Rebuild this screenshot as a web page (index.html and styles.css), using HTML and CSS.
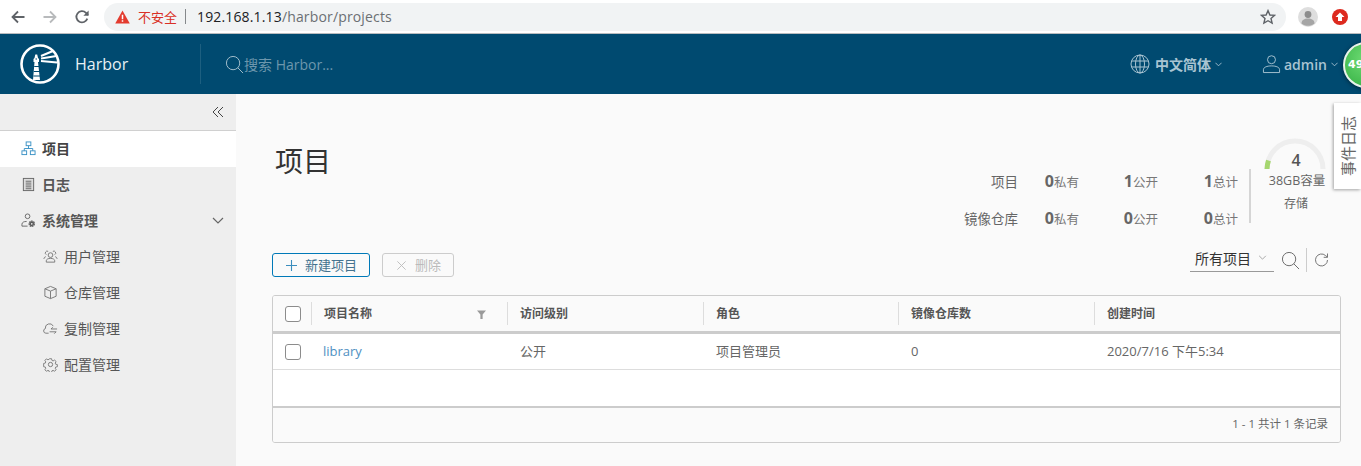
FILE: index.html
```html
<!DOCTYPE html>
<html lang="zh-CN">
<head>
<meta charset="utf-8">
<title>Harbor</title>
<link rel="stylesheet" href="styles.css">
</head>
<body>
<div class="browser">
  <svg class="nav-ico back" viewBox="0 0 16 16"><path d="M14.500 8H2.500M8 2.500 2.500 8 8 13.500"/></svg>
  <svg class="nav-ico fwd" viewBox="0 0 16 16"><path d="M1.500 8h12M8 2.500 13.500 8 8 13.500"/></svg>
  <svg class="nav-ico reload" viewBox="0 0 16 16"><path d="M13.300 9.600A5.600 5.600 0 1 1 12 3.900L14 6"/><path class="fill" d="M14.600 1.600v5.200H9.400z"/></svg>
  <div class="omnibox">
    <svg class="warn" viewBox="0 0 16 15"><path d="M8 .5 15.800 14.500H.2z" fill="#e33b2e"/><path d="M7.200 5h1.600v5H7.200zM7.200 11h1.600v1.700H7.200z" fill="#fff"/></svg>
    <span class="insecure">不安全</span><span class="omni-sep"></span>
    <span class="url"><b>192.168.1.13</b>/harbor/projects</span>
    <svg class="star" viewBox="0 0 16 16"><path d="M8 1.600 9.900 6l4.700.4-3.600 3.100 1.100 4.600L8 11.700l-4.100 2.400L5 9.500 1.400 6.400 6.100 6z"/></svg>
  </div>
  <div class="avatar"><svg viewBox="0 0 20 20"><circle cx="10" cy="7.500" r="3.400" fill="#8d8d8d"/><path d="M3.500 16.500c0-3.400 3-4.900 6.500-4.900s6.500 1.500 6.500 4.900c-1.800 1.500-4 2.300-6.500 2.300s-4.700-.8-6.500-2.300z" fill="#a5a5a5"/></svg></div>
  <div class="ext"><svg viewBox="0 0 16 16"><path d="M8 3.500 12.500 8H10v4H6V8H3.500z" fill="#fff"/></svg></div>
</div>

<header class="topbar">
  <div class="brand">
    <svg class="logo" viewBox="0 0 40 40">
      <circle cx="20" cy="20" r="18.500" fill="none" stroke="#fff" stroke-width="2.600"/>
      <path d="M13 36 14.500 18h-1v-3l1-1 .8-3.500h1.900l.8 3.500 1 1v3h-1L20 36z" fill="#fff" stroke="none"/>
      <path d="M14.200 22.500h5M13.800 27.500h6M13.400 32h7M15.500 15h1.500" stroke="#004a70" stroke-width="1.200"/>
      <path d="M21 12 33 7M21 14.500 36.500 12M21 17l16 1.500" stroke="#fff" stroke-width="2"/>
    </svg>
    <span class="brand-name">Harbor</span>
  </div>
  <div class="search">
    <svg class="search-ico" viewBox="0 0 20 20"><circle cx="8.500" cy="8.500" r="7"/><path d="m13.500 13.500 5.500 5.500"/></svg>
    <span>搜索 Harbor...</span>
  </div>
  <div class="top-actions">
    <div class="top-item lang">
      <svg class="globe" viewBox="0 0 20 20"><circle cx="10" cy="10" r="9"/><ellipse cx="10" cy="10" rx="4.500" ry="9"/><path d="M10 1v18M1.500 7h17M1.500 13h17"/></svg>
      <span>中文简体</span>
      <svg class="caret" viewBox="0 0 8 5"><path d="m.5.500 3.500 3.500L7.500.500"/></svg>
    </div>
    <div class="top-item user">
      <svg class="user-ico" viewBox="0 0 20 20"><circle cx="10" cy="5.500" r="4.200"/><path d="M1.500 19v-3c0-2.500 3.500-4 8.500-4s8.500 1.500 8.500 4v3z"/></svg>
      <span>admin</span>
      <svg class="caret" viewBox="0 0 8 5"><path d="m.5.500 3.500 3.500L7.500.500"/></svg>
    </div>
  </div>
  <div class="ball">49</div>
</header>

<div class="body">
  <nav class="sidebar">
    <div class="collapse"><svg viewBox="0 0 12 12"><path d="M6 1 1 6l5 5M11 1 6 6l5 5"/></svg></div>
    <a class="nav-item active">
      <svg class="ico blue" viewBox="0 0 16 16"><rect x="5.500" y="1" width="5" height="4"/><rect x="1" y="10.500" width="5" height="4"/><rect x="10" y="10.500" width="5" height="4"/><path d="M8 5v3M3.500 10.500V8h9v2.500"/></svg>
      <span>项目</span>
    </a>
    <a class="nav-item">
      <svg class="ico" viewBox="0 0 16 16"><rect x="2.500" y="1.500" width="11" height="13" fill="#ddd"/><path d="M5 4.500h6M5 6.500h6M5 8.500h6M5 10.500h6M5 12.500h6"/></svg>
      <span>日志</span>
    </a>
    <a class="nav-item">
      <svg class="ico" viewBox="0 0 16 16"><circle cx="7" cy="3.500" r="2.500"/><path d="M1 14v-2c0-2 2-3 5-3"/><path d="M1 14h6"/><circle cx="11.500" cy="11.500" r="2.500" fill="#555" stroke-dasharray="1.500 .5" stroke-width="2"/><circle cx="11.500" cy="11.500" r=".9" fill="#eee" stroke="none"/></svg>
      <span>系统管理</span>
      <svg class="chev" viewBox="0 0 12 7"><path d="m1 1 5 5 5-5"/></svg>
    </a>
    <a class="nav-item sub">
      <svg class="ico" viewBox="0 0 16 16"><circle cx="8" cy="6.500" r="2.500"/><path d="M3.500 14v-1.500c0-1.500 2-2.500 4.500-2.500s4.500 1 4.500 2.500V14z"/><path d="M5.500 2.500a2 2 0 0 0-2 3.500M1 10.500c0-1.300.9-2 2-2.300M10.500 2.500a2 2 0 0 1 2 3.500M15 10.500c0-1.300-.9-2-2-2.300"/></svg>
      <span>用户管理</span>
    </a>
    <a class="nav-item sub">
      <svg class="ico" viewBox="0 0 16 16"><path d="M8 1.500 14 4v8l-6 2.500L2 12V4z"/><path d="m2 4 6 2.500L14 4M8 6.500v8"/></svg>
      <span>仓库管理</span>
    </a>
    <a class="nav-item sub">
      <svg class="ico" viewBox="0 0 16 16"><path d="M6 13H3a2.500 2.500 0 0 1-.5-4.900 4.500 4.500 0 0 1 8.500-2.600"/><path d="M15 8.500H8.500l2-1.800M7 11.500h7"/><path d="m12 13.500 2-2"/></svg>
      <span>复制管理</span>
    </a>
    <a class="nav-item sub">
      <svg class="ico" viewBox="0 0 16 16"><circle cx="8" cy="8" r="2.300"/><path d="M6.800 1.500h2.400l.4 1.900 1.300.6 1.700-1 1.700 1.700-1 1.700.5 1.300 1.900.4v2.400l-1.900.4-.5 1.300 1 1.700-1.700 1.700-1.700-1-1.300.5-.4 1.900H6.800l-.4-1.900-1.300-.5-1.700 1-1.700-1.700 1-1.700-.5-1.300-1.900-.4V6.800l1.900-.4.500-1.300-1-1.700 1.700-1.700 1.700 1 1.300-.5z" transform="translate(.4 .4) scale(.95)"/></svg>
      <span>配置管理</span>
    </a>
  </nav>

  <main class="content">
    <div class="head-row">
      <h1>项目</h1>
      <div class="stats">
        <div class="stat-grid">
          <span class="stat-label">项目</span>
          <span class="stat"><b>0</b>私有</span>
          <span class="stat"><b>1</b>公开</span>
          <span class="stat"><b>1</b>总计</span>
          <span class="stat-label">镜像仓库</span>
          <span class="stat"><b>0</b>私有</span>
          <span class="stat"><b>0</b>公开</span>
          <span class="stat"><b>0</b>总计</span>
        </div>
        <div class="gauge">
          <svg class="arc" viewBox="0 0 62 32"><path class="track" d="M3 31a28 28 0 0 1 56 0"/><path class="val" d="M3 31a28 28 0 0 1 1.500-8.500"/></svg>
          <div class="gauge-num">4</div>
          <div class="gauge-cap">38GB容量</div>
          <div class="gauge-name">存储</div>
        </div>
      </div>
    </div>

    <div class="toolbar">
      <button class="btn primary"><svg viewBox="0 0 12 12"><path d="M6 0v12M0 6h12"/></svg><span>新建项目</span></button>
      <button class="btn disabled"><svg viewBox="0 0 12 12"><path d="m1.500 1.500 9 9M10.500 1.500l-9 9"/></svg><span>删除</span></button>
      <div class="tools">
        <div class="select"><span>所有项目</span><svg viewBox="0 0 10 6"><path d="m1 1 4 4 4-4"/></svg></div>
        <svg class="tool-ico" viewBox="0 0 20 20"><circle cx="8.500" cy="8.500" r="7"/><path d="m13.500 13.500 5.500 5.500"/></svg>
        <span class="tool-sep"></span>
        <svg class="tool-ico" viewBox="0 0 16 16"><path d="M13.500 8a6 6 0 1 1-2-4.500l1.800 1.500"/><path d="M13.500 1.500V5.300H9.700"/></svg>
      </div>
    </div>

    <section class="grid">
      <div class="row head">
        <div class="cell check"><span class="box"></span></div>
        <div class="cell">项目名称<svg class="filter" viewBox="0 0 8 8"><path d="M0 .5h8L5 4v4H3V4z"/></svg></div>
        <div class="cell">访问级别</div>
        <div class="cell">角色</div>
        <div class="cell">镜像仓库数</div>
        <div class="cell">创建时间</div>
      </div>
      <div class="row data">
        <div class="cell check"><span class="box"></span></div>
        <div class="cell"><a class="link">library</a></div>
        <div class="cell">公开</div>
        <div class="cell">项目管理员</div>
        <div class="cell">0</div>
        <div class="cell">2020/7/16 下午5:34</div>
      </div>
      <div class="empty"></div>
      <div class="foot">1 - 1 共计 1 条记录</div>
    </section>
  </main>
</div>

<aside class="side-tab"><span>事件日志</span></aside>
</body>
</html>
```
FILE: styles.css
```css
* { box-sizing: border-box; }
html, body { margin: 0; height: 466px; overflow: hidden; }
body {
  font-family: "Open Sans", "Noto Sans CJK SC", sans-serif;
  font-size: 13px;
  color: #565656;
  background: #fafafa;
  display: flex;
  flex-direction: column;
}
svg { fill: none; stroke: currentColor; stroke-width: 1; flex: none; display: block; }

/* browser chrome */
.browser {
  height: 34px;
  flex: none;
  background: #fff;
  border-bottom: 1px solid #b9bcbf;
  display: flex;
  align-items: center;
  padding-left: 10px;
}
.nav-ico { width: 16px; height: 16px; stroke-width: 1.800; color: #5f6368; margin-right: 16px; }
.nav-ico.fwd { color: #b8babc; }
.nav-ico .fill { fill: currentColor; stroke: none; }
.nav-ico.reload { margin-right: 14px; }
.omnibox {
  width: 1182px;
  height: 28px;
  background: #f1f3f4;
  border-radius: 14px;
  display: flex;
  align-items: center;
  padding: 0 10px 0 11px;
}
.warn { width: 15px; height: 14px; stroke: none; margin-right: 8px; }
.insecure { color: #d93025; font-size: 13px; }
.omni-sep { width: 1px; height: 15px; background: #85888b; margin: 0 11px 0 8px; }
.url { font-size: 14px; color: #6b6f73; flex: 1; letter-spacing: .15px; }
.url b { font-weight: 400; color: #202124; }
.star { width: 16px; height: 16px; color: #5f6368; stroke-width: 1.400; }
.avatar { width: 20px; height: 20px; border-radius: 50%; background: #dedede; margin-left: 12px; overflow: hidden; }
.avatar svg { width: 20px; height: 20px; stroke: none; }
.ext { width: 16px; height: 16px; border-radius: 50%; background: #dd2a1f; margin-left: 14px; }
.ext svg { width: 16px; height: 16px; stroke: none; }

/* header */
.topbar {
  height: 60px;
  flex: none;
  background: #004a70;
  display: flex;
  align-items: center;
  position: relative;
  color: #fff;
}
.brand { width: 201px; height: 40px; padding-left: 20px; display: flex; align-items: center; border-right: 1px solid #1d5f80; }
.logo { width: 40px; height: 40px; }
.brand-name { font-size: 16px; margin-left: 15px; color: #e8f1f5; }
.search { display: flex; align-items: center; margin-left: 24px; color: #6d97ad; font-size: 14px; }
.search-ico { width: 19px; height: 19px; color: #a9c2cf; }
.top-actions { margin-left: auto; display: flex; align-items: center; padding-right: 23px; color: #a9c4d2; font-size: 14px; font-weight: 600; }
.top-item { display: flex; align-items: center; }
.globe { width: 20px; height: 20px; margin-right: 5px; }
.lang { margin-right: 40px; }
.user-ico { width: 19px; height: 20px; margin-right: 3px; }
.caret { width: 7px; height: 5px; margin-left: 4px; }
.ball {
  position: absolute;
  left: 1343px;
  top: 8px;
  width: 46px;
  height: 46px;
  border-radius: 50%;
  border: 2px solid #e9f3ea;
  background: radial-gradient(circle at 50% 35%, #6fdc74, #35b044);
  box-shadow: 0 1px 4px rgba(0,0,0,.5);
  color: #fff;
  font: 700 11px/42px "DejaVu Sans", sans-serif;
  padding-left: 3px;
}

/* layout */
.body { flex: 1; display: flex; min-height: 0; }
.sidebar { width: 236px; flex: none; background: #eee; }
.collapse { height: 37px; border-bottom: 1px solid #d0d0d0; display: flex; justify-content: flex-end; align-items: center; padding-right: 12px; }
.collapse svg { width: 12px; height: 12px; color: #444; }
.nav-item { height: 36px; display: flex; align-items: center; padding: 0 0 2px 21px; color: #565656; font-size: 14px; font-weight: 600; }
.nav-item.active { background: #fff; color: #444; }
.nav-item .ico { width: 15px; height: 15px; margin-right: 6px; color: #666; }
.nav-item .ico.blue { color: #3b92c5; }
.nav-item .chev { width: 12px; height: 7px; margin-left: auto; margin-right: 12px; color: #666; stroke-width: 1.200; }
.nav-item.sub { padding-left: 43px; font-weight: 400; }
.nav-item.sub .ico { color: #777; }

.content { flex: 1; min-width: 0; padding: 0 20px 0 36px; }
.head-row { height: 159px; display: flex; position: relative; }
h1 { margin: 47px 0 0 3px; font-size: 28px; font-weight: 400; line-height: 40px; color: #333; }
.stats { position: absolute; right: 0; top: 44px; display: flex; align-items: flex-start; }
.stats::after { content: ""; position: absolute; right: 90px; top: 31px; width: 2px; height: 54px; background: #d5d5d5; }
.stat-grid {
  display: grid;
  grid-template-columns: auto 60px 79px 80px;
  grid-auto-rows: 37px;
  margin-top: 24px;
}
.stat-label { text-align: right; font-size: 13.500px; align-self: center; color: #666; padding-right: 1px; }
.stat { text-align: right; align-self: center; font-size: 12.500px; color: #777; }
.stat b { font-size: 16px; font-weight: 700; color: #666; }
.gauge { width: 90px; height: 90px; margin-left: 13px; position: relative; text-align: center; font-size: 12px; }
.arc { position: absolute; left: 13px; top: 0; width: 62px; height: 32px; }
.arc .track { stroke: #eee; stroke-width: 5; }
.arc .val { stroke: #a5d66f; stroke-width: 5; }
.gauge-num { position: absolute; left: 14px; width: 62px; top: 12px; font-size: 16px; font-weight: 600; line-height: 20px; color: #555; }
.gauge-cap { position: absolute; left: 12px; width: 68px; top: 35px; line-height: 16px; font-size: 12.500px; color: #666; }
.gauge-name { position: absolute; left: 12px; width: 66px; top: 58px; line-height: 16px; font-size: 12px; color: #666; }

.toolbar { height: 42px; display: flex; align-items: flex-start; }
.btn { height: 24px; display: flex; align-items: center; justify-content: center; border-radius: 3px; background: transparent; font: inherit; font-size: 13px; padding: 0; }
.btn span { position: relative; top: -1px; left: 1px; }
.btn svg { width: 11px; height: 11px; margin-right: 7px; }
.btn.primary { width: 98px; border: 1px solid #0079b8; color: #44738f; }
.btn.primary svg { color: #3b8dbd; stroke-width: 1.200; }
.btn.disabled { width: 72px; margin-left: 12px; border: 1px solid #ccc; color: #bbb; }
.btn.disabled svg { color: #bbb; }
.tools { margin-left: auto; display: flex; align-items: center; height: 24px; padding-right: 11px; margin-top: -5px; }
.select { width: 84px; height: 24px; border-bottom: 1px solid #999; display: flex; align-items: center; justify-content: space-between; padding: 0 7px 4px 5px; color: #333; font-size: 14px; }
.select svg { width: 9px; height: 5px; color: #999; }
.tool-ico { width: 19px; height: 19px; color: #666; margin-left: 7px; }
.tool-ico:last-child { width: 16px; height: 16px; margin-left: 7px; color: #777; }
.tool-sep { width: 1px; height: 24px; background: #ccc; margin-left: 6px; }

.grid { height: 148px; border: 1px solid #ccc; border-radius: 3px; background: #fff; overflow: hidden; }
.row { display: grid; grid-template-columns: 38px 196px 196px 195px 196px 1fr; align-items: center; }
.row.head { height: 38px; background: #fafafa; border-bottom: 3px solid #ccc; font-size: 12px; font-weight: 600; color: #555; }
.row.head .cell { height: 23px; display: flex; align-items: center; padding-bottom: 2px; border-left: 1px solid #ddd; position: relative; }
.row.head .cell.check { border-left: 0; padding-bottom: 0; }
.row.data { height: 36px; border-bottom: 1px solid #ddd; font-size: 13px; color: #666; }
.row.data .cell { position: relative; top: -1px; }
.row.data .cell.check { top: 0; }
.cell { padding-left: 12px; }
.row.data .cell + .cell + .cell { padding-left: 13px; }
.cell.check { padding: 0 0 0 12px; display: flex; align-items: center; }
.box { width: 16px; height: 16px; border: 1px solid #8c8c8c; border-radius: 3px; background: #fff; }
.link { color: #4f90c2; }
.filter { width: 9px; height: 9px; stroke: none; fill: #9a9a9a; position: absolute; left: 165px; top: 8px; }
.empty { height: 38px; border-bottom: 2px solid #ccc; }
.foot { height: 35px; background: #fafafa; display: flex; align-items: center; justify-content: flex-end; padding: 0 12px 5px 0; font-size: 11.500px; color: #666; }

.side-tab {
  position: absolute;
  left: 1334px;
  top: 103px;
  width: 27px;
  height: 86px;
  background: #fff;
  box-shadow: -1px 1px 3px rgba(0,0,0,.35);
  display: flex;
  align-items: center;
  justify-content: center;
}
.side-tab span { writing-mode: vertical-rl; text-orientation: sideways; transform: rotate(180deg); font-size: 15px; color: #666; }
```
